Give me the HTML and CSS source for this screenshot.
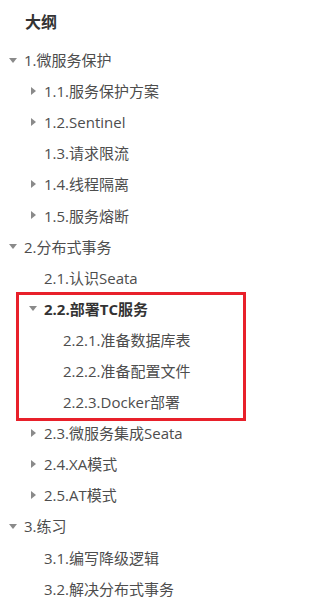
FILE: index.html
```html
<!DOCTYPE html>
<html lang="zh-CN">
<head>
    <meta charset="UTF-8">
    <meta name="viewport" content="width=device-width, initial-scale=1.0">
    <title>大纲</title>
    <link rel="stylesheet" href="styles.css">
</head>
<body>
    <div class="outline">
        <h3 class="outline-title">大纲</h3>
        <div class="item lv1"><span class="toggle open"></span><span class="label">1.微服务保护</span></div>
        <div class="item lv2"><span class="toggle closed"></span><span class="label">1.1.服务保护方案</span></div>
        <div class="item lv2"><span class="toggle closed"></span><span class="label">1.2.Sentinel</span></div>
        <div class="item lv2"><span class="toggle"></span><span class="label">1.3.请求限流</span></div>
        <div class="item lv2"><span class="toggle closed"></span><span class="label">1.4.线程隔离</span></div>
        <div class="item lv2"><span class="toggle closed"></span><span class="label">1.5.服务熔断</span></div>
        <div class="item lv1"><span class="toggle open"></span><span class="label">2.分布式事务</span></div>
        <div class="item lv2"><span class="toggle"></span><span class="label">2.1.认识Seata</span></div>
        <div class="marked">
            <div class="item lv2 active"><span class="toggle open"></span><span class="label">2.2.部署TC服务</span></div>
            <div class="item lv3"><span class="toggle"></span><span class="label">2.2.1.准备数据库表</span></div>
            <div class="item lv3"><span class="toggle"></span><span class="label">2.2.2.准备配置文件</span></div>
            <div class="item lv3"><span class="toggle"></span><span class="label">2.2.3.Docker部署</span></div>
        </div>
        <div class="item lv2"><span class="toggle closed"></span><span class="label">2.3.微服务集成Seata</span></div>
        <div class="item lv2"><span class="toggle closed"></span><span class="label">2.4.XA模式</span></div>
        <div class="item lv2"><span class="toggle closed"></span><span class="label">2.5.AT模式</span></div>
        <div class="item lv1"><span class="toggle open"></span><span class="label">3.练习</span></div>
        <div class="item lv2"><span class="toggle"></span><span class="label">3.1.编写降级逻辑</span></div>
        <div class="item lv2"><span class="toggle"></span><span class="label">3.2.解决分布式事务</span></div>
    </div>
</body>
</html>
```

FILE: styles.css
```css
body {
    margin: 0;
    background: #ffffff;
    font-family: "Open Sans", "Noto Sans CJK SC", sans-serif;
    color: #4d4d4d;
}
.outline {
    padding-top: 7px;
}
.outline-title {
    margin: 0 0 6px 25px;
    height: 31px;
    line-height: 31px;
    font-size: 16px;
    font-weight: bold;
    color: #333333;
}
.item {
    display: flex;
    align-items: center;
    height: 31.1px;
    font-size: 15px;
    white-space: nowrap;
}
.lv1 {
    padding-left: 7px;
}
.lv2 {
    padding-left: 27px;
}
.lv3 {
    padding-left: 46px;
}
.toggle {
    width: 17px;
    height: 10px;
    flex: none;
    position: relative;
}
.toggle.open::before {
    content: "";
    position: absolute;
    left: 2px;
    top: 3px;
    border-left: 4px solid transparent;
    border-right: 4px solid transparent;
    border-top: 5px solid #8a8a8a;
}
.toggle.closed::before {
    content: "";
    position: absolute;
    left: 4px;
    top: 1px;
    border-top: 4px solid transparent;
    border-bottom: 4px solid transparent;
    border-left: 5px solid #8a8a8a;
}
.active .label {
    font-weight: bold;
    color: #333333;
}
.marked {
    position: relative;
}
.marked::after {
    content: "";
    position: absolute;
    left: 16px;
    width: 224px;
    top: -1px;
    bottom: -4px;
    border: 3px solid #e8202a;
    pointer-events: none;
}
```
